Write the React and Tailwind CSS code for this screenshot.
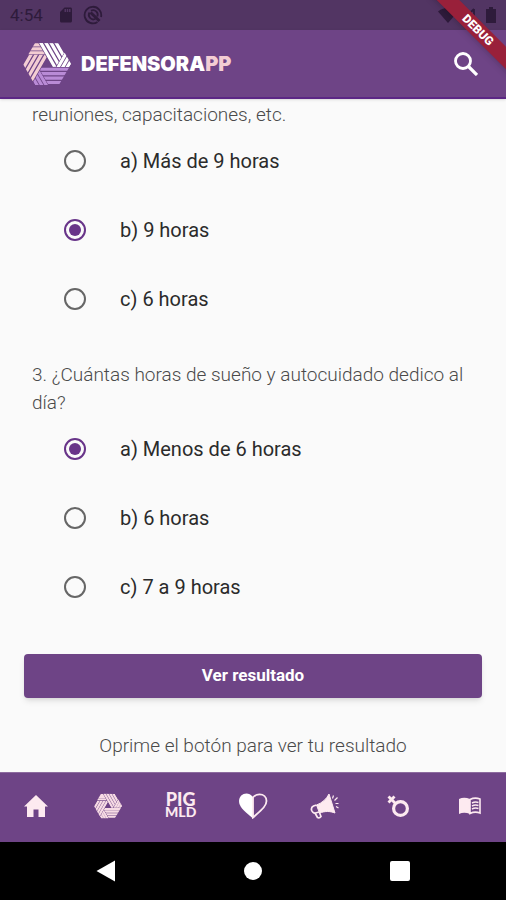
import { useState } from "react";

// One of the three woven arms: a striped cap and the stripes that run out from under it.
function Arm({ id, color, angle, width }) {
  return (
    <g transform={`rotate(${angle})`} stroke={color} strokeWidth={width} fill="none">
      <g clipPath={`url(#${id}-cap)`}>
        <path d="M-24 -19.2H12M-24 -15.2H12M-24 -11.2H12" />
      </g>
      <g clipPath={`url(#${id}-leg)`}>
        <path d="M-7.2 -24.5L-30.9 16.5M-2.1 -24.5L-25.8 16.5M3 -24.5L-20.7 16.5M8.1 -24.5L-15.6 16.5" />
      </g>
    </g>
  );
}

function HexLogo({ id, colors, width = 3.2, className }) {
  return (
    <svg viewBox="-24 -22 48 44" className={className} aria-hidden="true">
      <defs>
        <clipPath id={`${id}-cap`}>
          <polygon points="-12,-21 -8.700,-21 -2,-9.400 -18.700,-9.400" />
        </clipPath>
        <clipPath id={`${id}-leg`}>
          <polygon points="-18.700,-9.200 -2,-9.200 0,-6 -13.800,17.900 -24,0" />
        </clipPath>
      </defs>
      <Arm id={id} color={colors[0]} angle={0} width={width} />
      <Arm id={id} color={colors[1]} angle={120} width={width} />
      <Arm id={id} color={colors[2]} angle={240} width={width} />
    </svg>
  );
}

function StatusBar() {
  return (
    <div className="flex h-[30px] items-center bg-[#523563] px-2.5 text-[#2e1b3b]">
      <span className="text-[17px] leading-5">4:54</span>
      <svg viewBox="0 0 24 24" className="ml-3.5 size-[18px]" fill="currentColor" aria-hidden="true">
        <path d="M18 2h-8L4 8v12c0 1.100 .9 2 2 2h12c1.100 0 2-.9 2-2V4c0-1.100-.9-2-2-2zM12 8h-2V4h2v4zm3 0h-2V4h2v4zm3 0h-2V4h2v4z" />
      </svg>
      <svg viewBox="0 0 20 20" className="ml-2 size-5" fill="none" stroke="currentColor" strokeWidth="1.800" aria-hidden="true">
        <path d="M14.500 17A8.300 8.300 0 1 1 18 12" />
        <path d="M6.500 7.500A4.500 4.500 0 0 0 12.500 13.800M8 5.800A4.500 4.500 0 0 1 14.300 11.500" />
        <path d="M7.500 7.500L16.500 16" strokeWidth="3" />
      </svg>
      <div className="ml-auto flex items-center gap-1">
        <svg viewBox="0 0 20 16" className="h-4 w-5" fill="currentColor" aria-hidden="true">
          <path d="M0 4.500Q10 -3 20 4.500L10 16z" />
        </svg>
        <svg viewBox="0 0 16 16" className="size-4" fill="none" stroke="currentColor" strokeWidth="1.800" aria-hidden="true">
          <path d="M12 2v12M12 2L3 11H14" />
        </svg>
        <svg viewBox="0 0 10 16" className="ml-1 h-4 w-2.5" fill="currentColor" aria-hidden="true">
          <path d="M3 0h4v2h3v14H0V2h3z" />
        </svg>
      </div>
    </div>
  );
}

function Header() {
  return (
    <header className="relative z-10 flex h-[69px] items-center border-b-2 border-[#5c2785] bg-[#6e4486] pr-7 pl-[23px] shadow-sm">
      <HexLogo id="brand" colors={["#f3cdd3", "#ffffff", "#b98bd6"]} className="h-11 w-12" />
      <h1 className="ml-2.5 font-[Inter,sans-serif] text-[20px] leading-6 font-black text-white">
        DEFENSORA<span className="text-[#f3cdd3]">PP</span>
      </h1>
      <button type="button" aria-label="Buscar" className="ml-auto text-white">
        <svg viewBox="0 0 24 24" className="size-6" fill="none" stroke="currentColor" aria-hidden="true">
          <circle cx="9" cy="9" r="7.500" strokeWidth="2.800" />
          <path d="M14 14L23 23" strokeWidth="3.200" />
        </svg>
      </button>
    </header>
  );
}

function Question({ name, legend, options, initial }) {
  const [value, setValue] = useState(initial);
  return (
    <fieldset>
      <legend className="px-8 text-[19px] leading-7 font-light text-[#4a4a4a]">{legend}</legend>
      <div className="mt-2 flex flex-col gap-[21px]">
        {options.map((option) => (
          <label key={option} className="flex h-12 items-center gap-[34px] pl-16 text-[20px] text-[#2b2b2b]">
            <input
              type="radio"
              name={name}
              checked={value === option}
              onChange={() => setValue(option)}
              className="grid size-[22px] appearance-none place-items-center rounded-full border-2 border-[#666666] checked:border-[#683489] checked:before:size-3 checked:before:rounded-full checked:before:bg-[#683489]"
            />
            {option}
          </label>
        ))}
      </div>
    </fieldset>
  );
}

function NavButton({ label, children }) {
  return (
    <button type="button" aria-label={label} className="flex h-full items-center justify-center pb-1">
      {children}
    </button>
  );
}

function BottomNav() {
  return (
    <nav className="grid h-[70px] grid-cols-7 border-t border-[#8d6b9f] bg-[#6e4486] text-[#fdeaf0]">
      <NavButton label="Inicio">
        <svg viewBox="0 0 24 22" className="h-[22px] w-6" fill="currentColor" aria-hidden="true">
          <path d="M12 0L24 11.500H21V22H14.500V14.500H9.500V22H3V11.500H0z" />
        </svg>
      </NavButton>
      <NavButton label="DefensorApp">
        <HexLogo id="tab" colors={["#f6dbe4", "#f6dbe4", "#f6dbe4"]} width={3.7} className="h-[26px] w-7" />
      </NavButton>
      <NavButton label="PIG MLD">
        <span className="flex flex-col items-center font-[Lato,sans-serif] font-black">
          <span className="text-[18px] leading-[13px]">PIG</span>
          <span className="text-[14px] leading-3">MLD</span>
        </span>
      </NavButton>
      <NavButton label="Salud">
        <svg viewBox="0 0 30 26" className="h-[26px] w-[30px]" aria-hidden="true">
          <path d="M15 4C13 1.500 10.500 .5 8.500 .5 4.500 .5 1 3.500 1 8c0 5.500 4 9 14 17.500z" fill="#ffffff" />
          <path d="M15 4.500C17 2 19.500 1.400 21.500 1.400 25.500 1.400 28.500 4 28.500 8c0 5-4.500 8.500-13.500 16.500z" fill="none" stroke="#fdeaf0" strokeWidth="1.800" />
        </svg>
      </NavButton>
      <NavButton label="Denuncia">
        <svg viewBox="0 0 30 26" className="h-[26px] w-[30px]" fill="none" stroke="currentColor" aria-hidden="true">
          <path d="M19 1L25 20C20 18 15 18 9.500 20L6.500 12C12 10 16.500 6 19 1z" fill="currentColor" />
          <path d="M6.500 12L3.500 13C1.500 14 1 15.500 1.700 17.500 2.500 19.500 4 20.300 5.500 20L9 19" strokeWidth="1.700" />
          <path d="M5 20L7.500 24.500Q9.500 25.500 11 23.500L9.500 19.500" strokeWidth="1.700" />
          <path d="M22.500 5.500L23.500 2.500M24.500 7.500L27.500 4.500M25.500 10.500H28.500M26 13.500L28.500 15" strokeWidth="1.200" />
        </svg>
      </NavButton>
      <NavButton label="Género">
        <svg viewBox="0 0 22 22" className="size-[22px]" fill="none" stroke="currentColor" aria-hidden="true">
          <circle cx="13.500" cy="13.500" r="6.900" strokeWidth="3.200" />
          <path d="M9 9L1.500 1.500" strokeWidth="2.800" />
          <path d="M1.500 7.500L7.500 1.500" strokeWidth="2.800" />
        </svg>
      </NavButton>
      <NavButton label="Biblioteca">
        <svg viewBox="0 0 22 18" className="h-[18px] w-[22px]" fill="none" stroke="currentColor" aria-hidden="true">
          <path d="M0 2Q5 -0.500 11 2V17Q5 14.500 0 17z" fill="currentColor" stroke="none" />
          <path d="M11 2.500Q16 0 21 2V16Q16 14 11 16.500z" strokeWidth="1.600" />
          <path d="M13 6Q16 4.500 19.500 5.500M13 9Q16 7.500 19.500 8.500M13 12Q16 10.500 19.500 11.500" strokeWidth="1.500" />
        </svg>
      </NavButton>
    </nav>
  );
}

function SystemBar() {
  return (
    <div className="flex h-[58px] items-center justify-center gap-32 bg-black text-white">
      <button type="button" aria-label="Atrás">
        <svg viewBox="0 0 20 22" className="h-[22px] w-5" fill="currentColor" aria-hidden="true">
          <path d="M19 0.500V21.500L0.500 11z" />
        </svg>
      </button>
      <button type="button" aria-label="Pantalla de inicio" className="size-[18px] rounded-full bg-white" />
      <button type="button" aria-label="Recientes" className="size-5 rounded-xs bg-white" />
    </div>
  );
}

export default function App() {
  return (
    <div className="relative flex min-h-screen flex-col overflow-hidden bg-[#fafafa] font-[Roboto,sans-serif]">
      <StatusBar />
      <Header />
      <main className="flex flex-1 flex-col pt-0.5 pb-3">
        <Question
          name="trabajo"
          legend="reuniones, capacitaciones, etc."
          options={["a) Más de 9 horas", "b) 9 horas", "c) 6 horas"]}
          initial="b) 9 horas"
        />
        <div className="mt-[38px]">
          <Question
            name="descanso"
            legend="3. ¿Cuántas horas de sueño y autocuidado dedico al día?"
            options={["a) Menos de 6 horas", "b) 6 horas", "c) 7 a 9 horas"]}
            initial="a) Menos de 6 horas"
          />
        </div>
        <button
          type="button"
          className="mx-6 mt-[43px] h-11 rounded-sm bg-[#6e4486] text-[17px] font-bold text-white shadow-md"
        >
          Ver resultado
        </button>
        <p className="mt-[34px] text-center text-[19px] leading-7 font-light text-[#4a4a4a]">
          Oprime el botón para ver tu resultado
        </p>
      </main>
      <BottomNav />
      <SystemBar />
      <div className="absolute top-[22px] -right-8 z-20 h-4 w-[120px] rotate-45 bg-[#99203a] text-center text-[12px] leading-4 font-black text-white shadow-md">
        DEBUG
      </div>
    </div>
  );
}
